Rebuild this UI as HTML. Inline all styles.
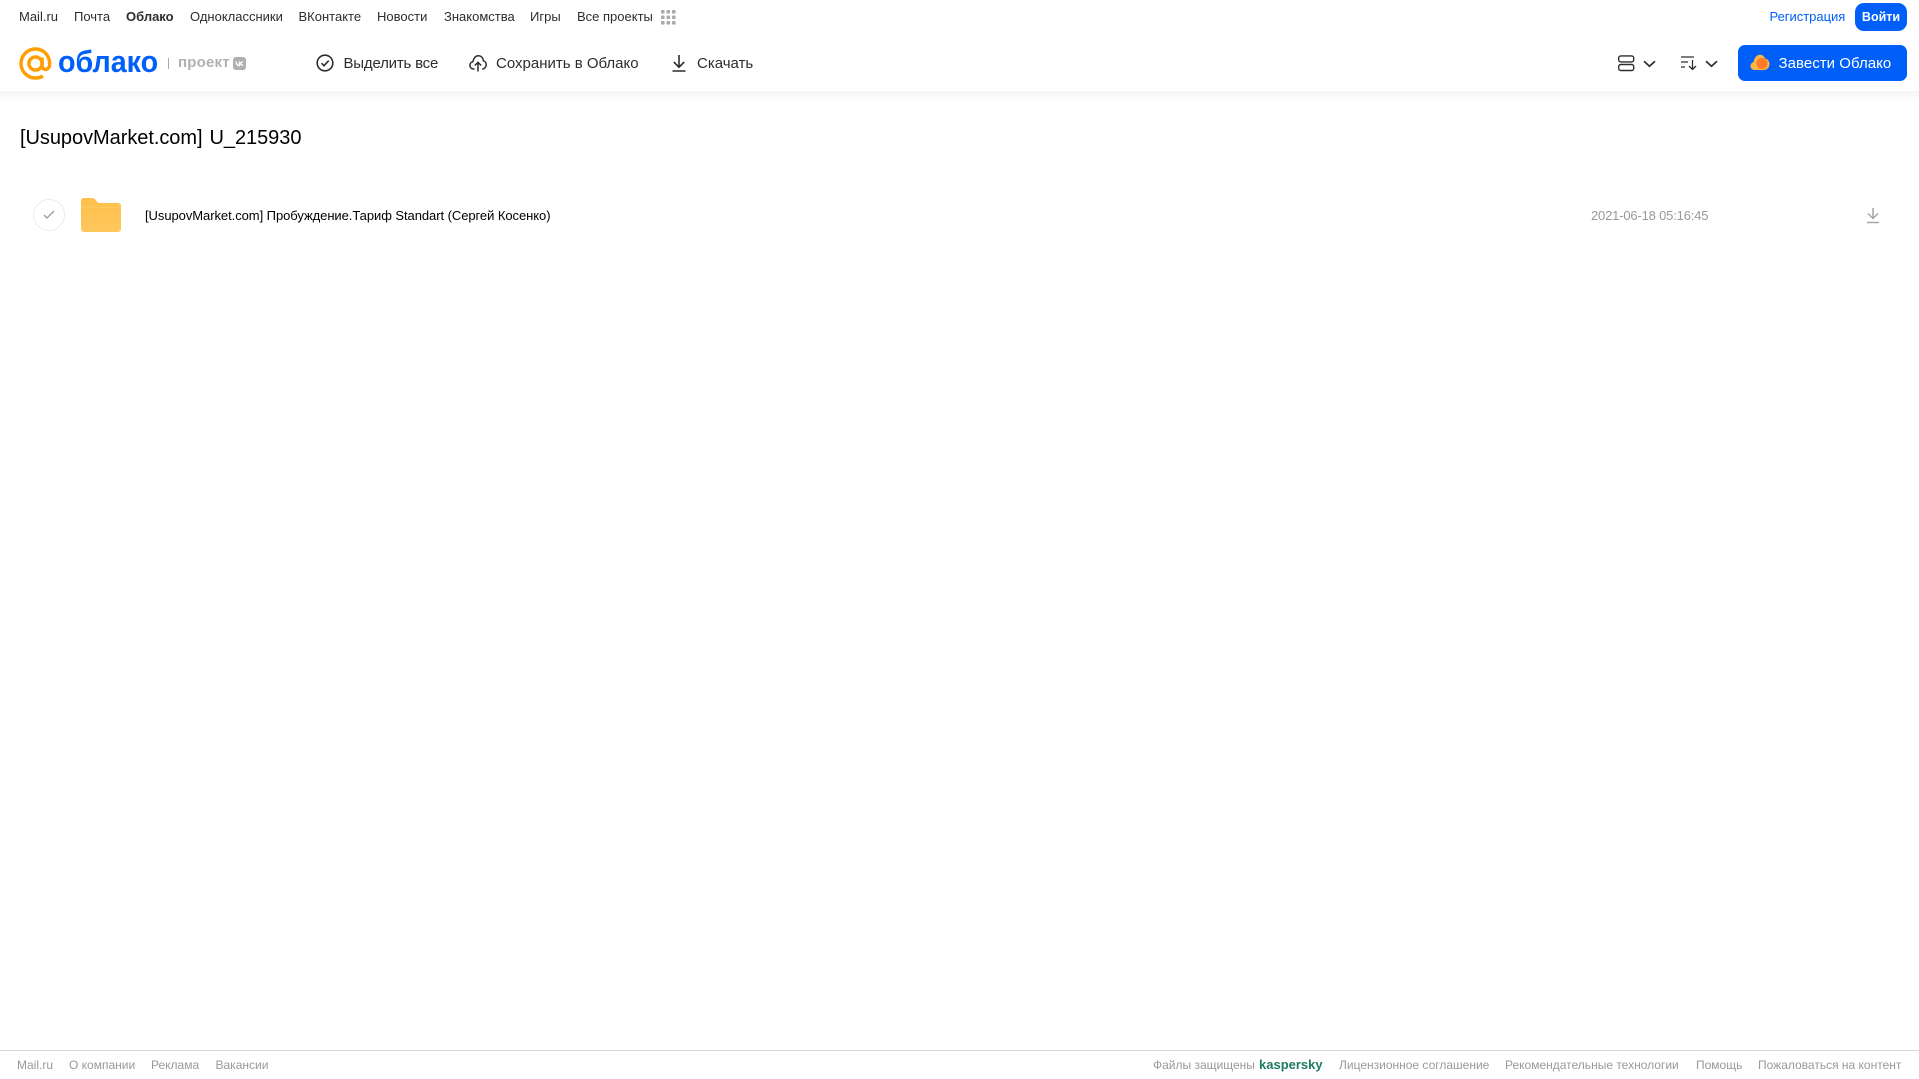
<!DOCTYPE html>
<html lang="ru"><head><meta charset="utf-8"><title>Облако</title>
<style>
html,body{margin:0;padding:0;background:#fff;width:1919px;height:1079px;overflow:hidden}
body{position:relative;font-family:"Liberation Sans",Arial,sans-serif}
.t{position:absolute;white-space:nowrap;line-height:20px;height:20px}
.n{top:7px;font-size:13px;color:#2c2d2e}
.b{top:53.5px;font-size:15px;color:#2c2d2e;letter-spacing:0}
.f{top:1055px;font-size:12px;color:#999}
svg{position:absolute;overflow:visible}
</style></head><body>
<div class="t n" style="left:19px">Mail.ru</div>
<div class="t n" style="left:74px">Почта</div>
<div class="t n" style="left:126px;font-weight:bold">Облако</div>
<div class="t n" style="left:190px">Одноклассники</div>
<div class="t n" style="left:298.500px">ВКонтакте</div>
<div class="t n" style="left:377px">Новости</div>
<div class="t n" style="left:444px">Знакомства</div>
<div class="t n" style="left:530px">Игры</div>
<div class="t n" style="left:577px">Все проекты</div>
<svg style="left:661px;top:10px" width="15" height="15" fill="#aaa"><rect x="0" y="0" width="3.6" height="3.6" rx="1"/><rect x="5.5" y="0" width="3.6" height="3.6" rx="1"/><rect x="11" y="0" width="3.6" height="3.6" rx="1"/><rect x="0" y="5.5" width="3.6" height="3.6" rx="1"/><rect x="5.5" y="5.5" width="3.6" height="3.6" rx="1"/><rect x="11" y="5.5" width="3.6" height="3.6" rx="1"/><rect x="0" y="11" width="3.6" height="3.6" rx="1"/><rect x="5.5" y="11" width="3.6" height="3.6" rx="1"/><rect x="11" y="11" width="3.6" height="3.6" rx="1"/></svg>

<div class="t n" style="left:1769.500px;color:#005ff9;letter-spacing:-.02px">Регистрация</div>
<div style="position:absolute;left:1855px;top:3px;width:52px;height:28px;border-radius:9px;background:#005ff9;color:#fff;font-size:12.5px;font-weight:bold;line-height:28px;text-align:center">Войти</div>

<!-- logo -->
<svg style="left:19px;top:47px" width="33" height="33" viewBox="0 0 33 33" fill="none" stroke="#ff9e00" stroke-width="3.4"><circle cx="16.5" cy="16.5" r="6.6"/><path d="M23.1 10.5v8.2c0 5.4 7.6 5.2 7.6-1.9C30.7 8.500 24.500 2 16.500 2 8.400 2 2 8.500 2 16.500S8.400 31 16.500 31c3 0 5.400-.7 7.500-2"/></svg>
<div class="t" style="left:57.500px;top:46px;height:32px;line-height:32px;font-size:31px;font-weight:bold;color:#005ff9;transform:scaleX(.925);transform-origin:0 50%">облако</div>
<div style="position:absolute;left:168px;top:58px;width:1px;height:11px;background:#aaa"></div>
<div class="t" style="left:178px;top:53px;font-size:15px;font-weight:bold;color:#b0b0b0;letter-spacing:.2px">проект</div>
<div style="position:absolute;left:233px;top:57px;width:13px;height:13px;border-radius:3px;background:#b0b0b0"></div>
<svg style="left:233px;top:57px" width="13" height="13" fill="none" stroke="#fff" stroke-width="1.3"><path d="M3 4.500c.3 2.500 1.500 4 3.500 4.200V4.500M9.800 4.500L7 6.500l3 2.200"/></svg>

<!-- toolbar -->
<svg style="left:316px;top:54px" width="18" height="18" fill="none" stroke="#2c2d2e" stroke-width="1.6"><circle cx="9" cy="9" r="7.8"/><path d="M5.500 9.200l2.500 2.500 4.700-5"/></svg>
<div class="t b" style="left:343.500px;letter-spacing:-.2px">Выделить все</div>
<svg style="left:469px;top:54px" width="18" height="18" fill="none" stroke="#2c2d2e" stroke-width="1.5"><path d="M5.500 15H4.500C2.300 15 .9 13.300.9 11.400c0-1.900 1.300-3.300 3-3.600C4.400 4.300 6.500 1.800 9.300 1.800c2.800 0 4.700 2.100 5.100 5 1.600.4 2.800 2 2.800 3.800 0 2.400-1.800 4.400-4 4.400"/><path d="M9 17.500V8.500M5.800 11.500L9 8.300l3.200 3.200"/></svg>
<div class="t b" style="left:496px">Сохранить в Облако</div>
<svg style="left:671px;top:54px" width="16" height="18" fill="none" stroke="#2c2d2e" stroke-width="1.6"><path d="M8 1v12M2.800 8L8 13.200 13.200 8M1.500 17h13"/></svg>
<div class="t b" style="left:697px">Скачать</div>

<!-- right controls -->
<svg style="left:1618px;top:55px" width="17" height="17" fill="none" stroke="#2c2d2e" stroke-width="1.4"><rect x=".7" y=".9" width="15" height="6" rx="2"/><rect x=".7" y="9.500" width="15" height="6" rx="2"/></svg>
<svg style="left:1643px;top:60px" width="13" height="8" fill="none" stroke="#2c2d2e" stroke-width="1.7"><path d="M1 1.200l5.500 5 5.500-5"/></svg>
<svg style="left:1681px;top:55px" width="17" height="16" fill="none" stroke="#2c2d2e" stroke-width="1.3"><path d="M0 2h13M0 7h7M0 12h4M11.500 5v9.500M8 11l3.500 3.500L15 11"/></svg>
<svg style="left:1705px;top:60px" width="13" height="8" fill="none" stroke="#2c2d2e" stroke-width="1.7"><path d="M1 1.200l5.500 5 5.500-5"/></svg>
<div style="position:absolute;left:1738px;top:45px;width:169px;height:36px;border-radius:7px;background:#005ff9"></div>
<svg style="left:1750px;top:54px" width="20" height="17"><path d="M4.500 16C2 16 .5 14 .5 12c0-2 1.300-3.400 3-3.700C4 5 5.500 2 8.500 1c3-.8 5.500 1 6.500 3.500 2.800.5 4.500 2.800 4.500 5.500 0 3.300-2.500 6-5.500 6z" fill="#ffb444"/><circle cx="12" cy="9.500" r="5.500" fill="#ff7a2a"/></svg>
<div class="t" style="left:1778.500px;top:53.5px;font-size:15px;color:#fff;letter-spacing:.04px">Завести Облако</div>

<div style="position:absolute;left:0;top:91px;width:1919px;height:12px;background:linear-gradient(#f5f5f5,#fff)"></div>

<div class="t" style="left:20px;top:124px;height:28px;line-height:28px;font-size:20px;color:#000;word-spacing:1.500px;letter-spacing:-.05px">[UsupovMarket.com] U_215930</div>

<!-- row -->
<div style="position:absolute;left:33px;top:199px;width:30px;height:30px;border:1px solid #ececec;border-radius:50%"></div>
<svg style="left:43px;top:210px" width="12" height="10" fill="none" stroke="#999" stroke-width="1.300"><path d="M1 5l3 3 7-7"/></svg>
<svg style="left:81px;top:198px" width="40" height="34"><defs><linearGradient id="g" x1="0" y1="0" x2="0" y2="1"><stop offset="0" stop-color="#ffc04a"/><stop offset="1" stop-color="#ffc75f"/></linearGradient></defs><path d="M0 3a3 3 0 0 1 3-3h8c2 0 3 1 4 2.500S17 5 19 5h18a3 3 0 0 1 3 3v23a3 3 0 0 1-3 3H3a3 3 0 0 1-3-3z" fill="url(#g)"/><path d="M0 9.500h40" stroke="#ffcc6b" stroke-width="1" opacity=".7"/></svg>
<div class="t" style="left:145px;top:205.500px;font-size:13px;color:#000;letter-spacing:-.06px">[UsupovMarket.com] Пробуждение.Тариф Standart (Сергей Косенко)</div>
<div class="t" style="left:1591px;top:205.500px;font-size:13px;color:#999;letter-spacing:-.18px">2021-06-18 05:16:45</div>
<svg style="left:1866px;top:207px" width="14" height="17" fill="none" stroke="#a6a6a6" stroke-width="1.500"><path d="M7 1v10M2 6.500L7 11.500 12 6.500M1 15.500h12"/></svg>

<!-- footer -->
<div style="position:absolute;left:0;top:1050px;width:1919px;height:1px;background:#d8d8d8"></div>
<div class="t f" style="left:17px">Mail.ru</div>
<div class="t f" style="left:69px">О компании</div>
<div class="t f" style="left:151px">Реклама</div>
<div class="t f" style="left:215.500px">Вакансии</div>
<div class="t f" style="left:1153px">Файлы защищены</div>
<div class="t f" style="left:1259px;color:#1d7a63;font-weight:bold;font-size:13px">kaspersky</div>
<div class="t f" style="left:1339px">Лицензионное соглашение</div>
<div class="t f" style="left:1505px">Рекомендательные технологии</div>
<div class="t f" style="left:1696px">Помощь</div>
<div class="t f" style="left:1758px">Пожаловаться на контент</div>
</body></html>
